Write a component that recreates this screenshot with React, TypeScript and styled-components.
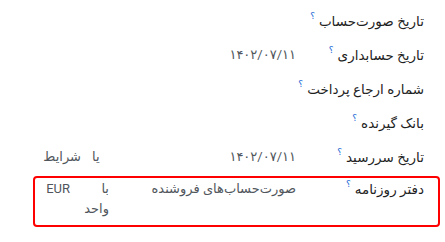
import React from 'react'
import styled, { createGlobalStyle } from 'styled-components'

const GlobalStyle = createGlobalStyle`
  html, body {
    margin: 0;
    padding: 0;
    background: #fff;
  }
  body {
    font-family: Roboto, "DejaVu Sans", sans-serif;
    font-size: 13.5px;
    color: #212529;
  }
`

type Field = {
  label: string
  value?: React.ReactNode
  highlight?: boolean
}

const App = () => {
  const fields: Field[] = [
    { label: 'تاریخ صورت‌حساب' },
    { label: 'تاریخ حسابداری', value: <Value>۱۴۰۲/۰۷/۱۱</Value> },
    { label: 'شماره ارجاع پرداخت' },
    { label: 'بانک گیرنده' },
    {
      label: 'تاریخ سررسید',
      value: (
        <Inline>
          <Value>۱۴۰۲/۰۷/۱۱</Value>
          <Joiner>یا</Joiner>
          <SideField $width={34}>شرایط</SideField>
        </Inline>
      ),
    },
    {
      label: 'دفتر روزنامه',
      highlight: true,
      value: (
        <Inline>
          <Value>صورت‌حساب‌های فروشنده</Value>
          <Joiner $narrow>با واحد</Joiner>
          <SideField $width={23}>EUR</SideField>
        </Inline>
      ),
    },
  ]

  return (
    <>
      <GlobalStyle />
      <Sheet dir='rtl'>
        {fields.map((f) => (
          <Row key={f.label} $highlight={f.highlight}>
            <Label>
              {f.label}
              <Help>؟</Help>
            </Label>
            <Cell>{f.value}</Cell>
          </Row>
        ))}
      </Sheet>
    </>
  )
}

const Sheet = styled.div`
  direction: rtl;
  display: flex;
  flex-direction: column;
  padding: 4px 5px 0 33px;
`
const Row = styled.div<{ $highlight?: boolean }>`
  display: grid;
  grid-template-columns: 128px 1fr;
  align-items: start;
  line-height: 20px;
  padding: 7px 16px 7px 14px;
  ${(p) =>
    p.$highlight &&
    `
    margin-top: 2px;
    padding: 1px 14px 6px 12px;
    border: 2px solid #ff0000;
    border-radius: 4px;
  `}
`
const Label = styled.div`
  color: #1f1f1f;
  white-space: nowrap;
`
const Help = styled.sup`
  display: inline-block;
  margin-right: 4px;
  font-size: 9px;
  line-height: 1;
  color: #1b6ad6;
  vertical-align: 7px;
`
const Cell = styled.div`
  min-width: 0;
  font-size: 13px;
  color: #50565c;
`
const Inline = styled.div`
  display: flex;
  align-items: flex-start;
`
const Value = styled.span`
  flex: 1;
  white-space: nowrap;
`
const Joiner = styled.span<{ $narrow?: boolean }>`
  margin: 0 ${(p) => (p.$narrow ? '0' : '11px')} 0 ${(p) => (p.$narrow ? '13px' : '11px')};
  ${(p) => p.$narrow && 'width: 26px;'}
`
const SideField = styled.span<{ $width: number }>`
  width: ${(p) => p.$width}px;
  white-space: nowrap;
`

export default App
